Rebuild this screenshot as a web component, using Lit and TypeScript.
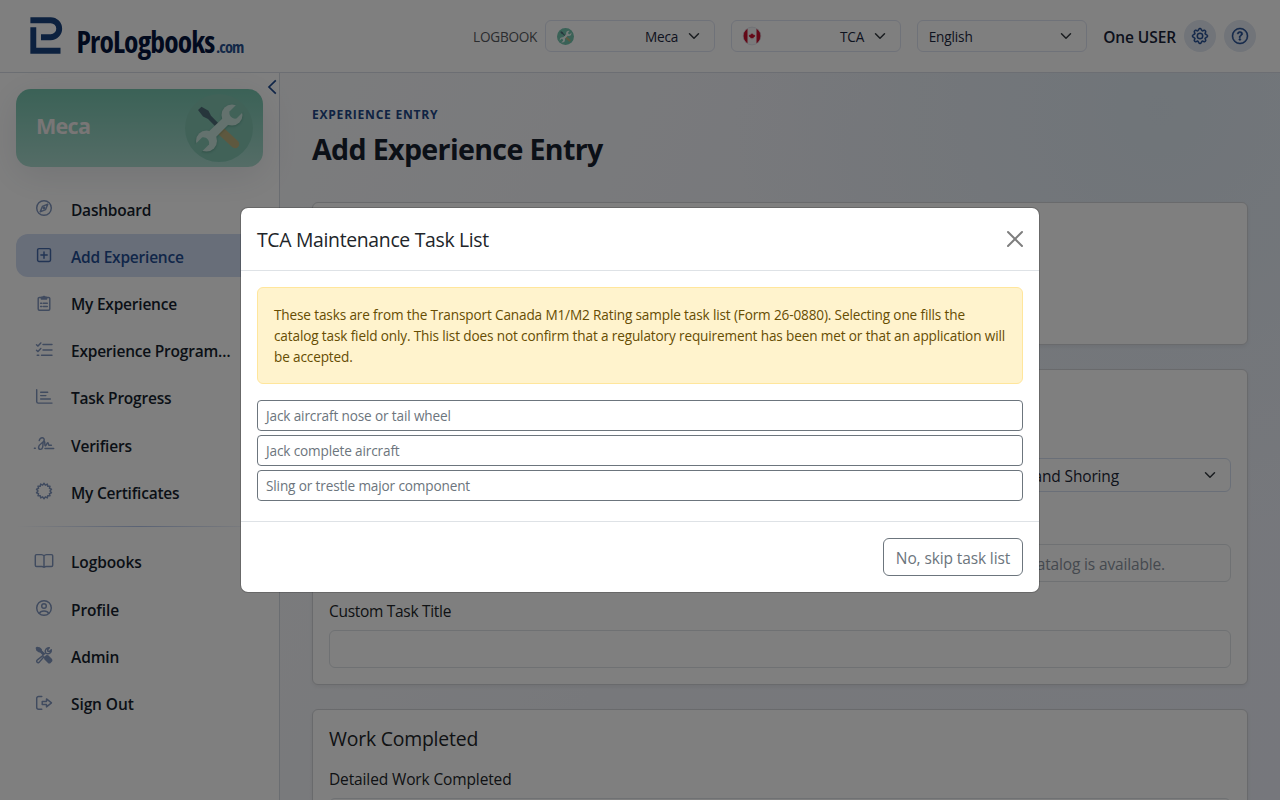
import { LitElement, html, css, svg } from "lit";
import { customElement, state } from "lit/decorators.js";
import { classMap } from "lit/directives/class-map.js";

const starPoints = Array.from({ length: 28 }, (_, i) => {
  const r = i % 2 ? 6 : 7.7;
  const a = (i * Math.PI) / 14;
  return `${(8 + r * Math.sin(a)).toFixed(2)},${(8 - r * Math.cos(a)).toFixed(2)}`;
}).join(" ");

const icons: Record<string, unknown> = {
  compass: svg`<circle cx="8" cy="8" r="7.3"/><path d="M11.8 4.2 9.6 9.6 4.2 11.8 6.4 6.4Z"/><circle cx="8" cy="8" r=".7"/>`,
  plus: svg`<rect x="1.6" y="1.6" width="12.9" height="12.9" rx="1.4"/><path d="M8 4.9v6.3M4.9 8h6.3"/>`,
  clipboard: svg`<path d="M5 2.4H3.4a1.2 1.2 0 0 0-1.2 1.2v10.5a1.2 1.2 0 0 0 1.2 1.2h9.2a1.2 1.2 0 0 0 1.2-1.2V3.6a1.2 1.2 0 0 0-1.2-1.2H11"/><path d="M5.4 4.1V2.3h1.3a1.4 1.4 0 0 1 2.6 0h1.3v1.8Z" fill="currentColor"/><path d="M7.3 8.2h4M7.3 11.4h4M4.6 8.2h1.1M4.6 11.4h1.1"/>`,
  checks: svg`<path d="M7 2.5h9M7 8h9M5.5 13.2H16M.5 2.7 2 4.1 4.8.9M.5 8.2 2 9.6 4.8 6.4M1.2 13.2h1.6"/>`,
  chart: svg`<path d="M.7.8v11.7a1.6 1.6 0 0 0 1.6 1.6H16M4.7 3.3h7M4.7 6.6h5.2M4.7 9.9h9.6"/>`,
  sign: svg`<path d="M-1.6 12.3h.9M3.2 4.6C4.200.9 8.600 1 8.200 4.200 7.800 7 3 7.700 2.600 11c-.3 2.900 3.300 3.300 4 .4.8-3.100-.1-6.100 1.400-6.200 1.500 0 .2 4.600 1.300 4.700 1.200.1 1.400-3.200 2.500-3.100 1 .1.300 2.500 1.400 2.500h2.200M9 12.500H17.700"/>`,
  badge: svg`<polygon points=${starPoints}/>`,
  book: svg`<path d="M8 3C7.400 1.900 6.400 1.600 5.400 1.600H.5a1.200 1.200 0 0 0-1.200 1.200v9.400a1.200 1.200 0 0 0 1.200 1.200H5.700c1 0 1.900.3 2.300.9.400-.6 1.300-.9 2.300-.9h5.200a1.200 1.200 0 0 0 1.200-1.200V2.800a1.200 1.200 0 0 0-1.200-1.200h-4.900C9.600 1.600 8.600 1.900 8 3ZM8 3v11"/>`,
  person: svg`<circle cx="8" cy="8" r="7.300"/><circle cx="8" cy="6" r="2.300"/><path d="M3.500 13.300c.7-1.900 2.300-2.300 4.500-2.300s3.800.4 4.500 2.300"/>`,
  tools: svg`<path d="M1 .4.400 1 .9 3.200 3 4.700h1.300l3 3.100 1-1-3.100-3V2.600L3.300.9ZM9.600 9.600 10.700 8.700l1.300.3 3.500 3.500a1.700 1.700 0 0 1 0 1.600l-1.400 1.400a1.700 1.700 0 0 1-1.600 0L9 12l-.3-1.300Z" fill="currentColor"/><path d="m6.900 8.600-5.500 4.300a1.500 1.500 0 1 0 2.100 2L8 9.700M8.900 6.600 9.600 5.700a3.500 3.500 0 0 1 3.700-4.900L11.600 2.700l.3 1.500 1.500.3 1.900-1.800a3.500 3.500 0 0 1-4.600 3.900"/>`,
  exit: svg`<path d="M5.800 1.500H2.600A1.900 1.900 0 0 0 .7 3.400v8.900a1.900 1.900 0 0 0 1.900 1.900h3.200M10.500 3.900l5 4-5 4V9.400H6.200V6.400h4.300Z"/>`,
};

const icon = (name: string) => html`<svg class="icon" viewBox="0 0 16 16">${icons[name]}</svg>`;
const chevron = html`<svg class="chev" viewBox="0 0 16 16"><path d="m2 5 6 6 6-6"/></svg>`;

const toolsArt = (id: string) => html`<svg class="art" viewBox="0 0 68 68">
  <defs>
    <mask id=${id}>
      <rect width="68" height="68" fill="#fff"/>
      <path d="M44.500 17.500 54 8l7 7-9.500 9.500c-4 1-8-3-7-7Z" fill="#000"/>
      <path d="M24 50.500 14.500 60l-7-7L17 43.500c4-1 8 3 7 7Z" fill="#000"/>
    </mask>
  </defs>
  <circle class="art-bg" cx="34" cy="34" r="34"/>
  <path d="m13 16 3.500-3.200 7 4 2.500 5L38 34l-3 3-12-12-5-2.500Z" fill="#4f6d78"/>
  <path d="m37 38 13 12" stroke="#bdb17f" stroke-width="8.500" stroke-linecap="round"/>
  <g mask="url(#${id})" class="wrench">
    <circle cx="47" cy="21" r="10.500"/><circle cx="21.500" cy="47" r="10.500"/>
    <path d="M29 32.500 38 24l6 6-19 19-7-6Z"/>
  </g>
</svg>`;

const leaf = "m0-4.100.9 1.600 1-.4-.3 2 1.200-1 .4.800 1.200-.2-.6 1.300.5.4L2 2.100l.2.900L.3 2.700V4.200h-.6V2.700L-2.200 3-2 2.100-4.300.4l.5-.4-.6-1.300 1.200.2.400-.8 1.200 1-.3-2 1 .4Z";

@customElement("app-root")
export class AppRoot extends LitElement {
  @state() private active = "Add Experience";

  private primary = [
    ["compass", "Dashboard"], ["plus", "Add Experience"], ["clipboard", "My Experience"],
    ["checks", "Experience Program…"], ["chart", "Task Progress"], ["sign", "Verifiers"], ["badge", "My Certificates"],
  ];
  private secondary = [["book", "Logbooks"], ["person", "Profile"], ["tools", "Admin"], ["exit", "Sign Out"]];
  private tasks = ["Jack aircraft nose or tail wheel", "Jack complete aircraft", "Sling or trestle major component"];

  static styles = css`
    :host { display: block; width: 1280px; height: 800px; overflow: hidden; position: relative; background: #fff;
      font-family: "Open Sans", "Noto Sans", sans-serif; font-size: 15.5px; font-stretch: 97.5%; line-height: 24px; color: #212529; }
    * { box-sizing: border-box; }
    h1, h2, h3, p { margin: 0; font-weight: 400; }
    svg { display: block; overflow: visible; flex: none; }
    button { font: inherit; font-stretch: inherit; background: none; cursor: pointer; }
    .page { height: 800px; display: grid; grid-template: 73px 1fr / 280px 1fr; }
    header { grid-column: 1 / 3; display: flex; align-items: center; border-bottom: 1px solid #d8dde6; padding: 0 24px 0 30px; background: #fff; }
    .logo { display: flex; align-items: flex-start; height: 72px; padding-top: 17px; color: #04143c; }
    .mark { width: 32px; height: 37px; fill: none; stroke: #19427f; stroke-width: 5.900; margin-right: 14.500px; }
    .name { font-weight: 700; font-size: 29.500px; font-stretch: 75%; letter-spacing: -.86px; line-height: 40px; padding-top: 5px; white-space: nowrap; }
    .com { font-weight: 700; font-size: 16.500px; letter-spacing: -.95px; color: #27508f; margin-left: 1.500px; }
    .tools { margin-left: auto; display: flex; align-items: center; }
    .label { font-size: 13.600px; font-weight: 500; color: #56595d; margin-right: 8px; letter-spacing: -.24px; padding-top: 2px; }
    .select { width: 170px; height: 32px; border: 1.500px solid #dfe4f2; border-radius: 6px; display: flex; align-items: center; margin-right: 16px; padding: 0 12px 0 10.500px; font-size: 13.600px; color: #1c2740; }
    .select span { padding-top: 2px; letter-spacing: -.15px; }
    .select .chev { margin-left: 8px; }
    .grow { flex: 1; }
    .chev { width: 16px; height: 12px; fill: none; stroke: #343a40; stroke-width: 2; stroke-linecap: round; stroke-linejoin: round; }
    .flag { width: 18px; height: 18px; }
    .mini { width: 17px; height: 17px; margin-right: 1px; }
    .art { width: 100%; height: 100%; }
    .mini .art-bg { fill: #74c4ae; }
    .mini .wrench { fill: #eef8f5; }
    .user { font-weight: 600; letter-spacing: -.1px; color: #182338; margin-right: 8px; padding-top: 2px; }
    .round { width: 32px; height: 32px; border-radius: 50%; background: #e2e8f2; display: grid; place-items: center; margin-left: 8px; color: #214b90; }
    .user + .round { margin-left: 0; }
    .round svg { width: 16px; height: 16px; fill: currentColor; stroke: currentColor; stroke-width: .5; }
    aside { border-right: 1px solid #d5dae3; padding: 16px; position: relative; background: #fff; }
    .collapse { position: absolute; left: 267px; top: 6px; width: 10px; height: 16px; fill: none; stroke: #214b90; stroke-width: 1.700; }
    .tile { height: 78px; border-radius: 15px; background: linear-gradient(#76c4ae, #a9d9cd); display: flex; align-items: center; justify-content: space-between; padding: 0 10px 0 20px; box-shadow: 0 8px 36px rgba(40,60,80,.12); color: #f3ecec; }
    .tile-name { font-size: 21.500px; font-weight: 700; letter-spacing: -.7px; padding-bottom: 5px; }
    .tile-art { width: 68px; height: 68px; }
    .tile .art-bg { fill: #82c4b1; }
    .tile .wrench { fill: #c8e4dc; filter: drop-shadow(0 1px 1px rgba(0,60,40,.25)); }
    nav { display: flex; flex-direction: column; gap: 4.200px; margin-top: 19.800px; }
    .item { height: 43px; border-radius: 12px; display: flex; align-items: center; padding-left: 19.600px; gap: 19.400px; color: #161f2e; font-weight: 600; letter-spacing: -.22px; white-space: nowrap; }
    .item span { padding-top: 2.600px; }
    .item.on { background: #d1dcf2; color: #224c92; }
    .icon { width: 16px; height: 16px; fill: none; stroke: currentColor; stroke-width: 1.450; color: #8196be; stroke-linecap: round; stroke-linejoin: round; }
    .on .icon { color: #4468a8; }
    .rule { height: 1px; margin: 12.800px 0 0; background: linear-gradient(90deg, transparent, #b5c6ea, transparent); }
    .second { margin-top: 12.800px; }
    .second .item { letter-spacing: -.1px; }
    main { overflow: hidden; padding: 32px; background: radial-gradient(circle at 88% 5%, rgba(222,233,242,.9), transparent 38%), linear-gradient(115deg, #f8f9fb 0%, #eff1f7 45%, #eceff8 100%); }
    .eyebrow { font-size: 12.100px; font-weight: 700; letter-spacing: .73px; color: #204686; line-height: 20px; }
    h1 { font-size: 28.600px; font-weight: 700; letter-spacing: -.66px; line-height: 40px; color: #16202f; margin-top: 4px; }
    .card { border: 1px solid #d2d4d8; border-radius: 6px; background: #fff; padding: 16px; margin-bottom: 24px; box-shadow: 0 2px 4px rgba(0,0,0,.06); }
    .card.top { height: 143.500px; margin-top: 32.500px; }
    .card.task { height: 316px; padding-top: 88px; }
    .card.work { height: 300px; margin-bottom: 0; }
    .field { border: 1px solid #dee2e6; border-radius: 6px; height: 38px; display: flex; align-items: center; justify-content: flex-end; }
    .field.pick { height: 34px; border-color: #d5dff0; padding-right: 12px; gap: 83px; color: #1c2636; width: 50%; margin-left: auto; }
    .field.pick span, .field.hint span { padding-top: 2px; letter-spacing: -.15px; }
    .field.hint { margin-top: 52px; padding-right: 65px; color: #8a929e; }
    .caption { padding-top: 1px; height: 24px; margin: 16px 0 8px; letter-spacing: -.3px; }
    .card h2 { font-size: 19.400px; letter-spacing: -.2px; padding-top: 1px; height: 24px; }
    h2 + .caption { letter-spacing: -.13px; }
    .backdrop { position: absolute; inset: 0; background: rgba(0,0,0,.5); display: grid; place-items: center; }
    .modal { width: 800px; border: 1px solid rgba(0,0,0,.175); border-radius: 8px; background: #fff; background-clip: padding-box; }
    .head { height: 63px; padding: 0 16px; border-bottom: 1px solid #dee2e6; display: flex; align-items: center; justify-content: space-between; }
    .head h3 { font-size: 19.400px; letter-spacing: -.32px; padding-top: 1px; }
    .close { border: 0; padding: 0; opacity: .5; width: 16px; height: 16px; }
    .body { padding: 16px 16px 20px; display: flex; flex-direction: column; gap: 4px; }
    .alert { height: 97px; border: 1px solid #ffe69c; border-radius: 6px; background: #fff3cd; color: #664d03; padding: 16px; font-size: 13.600px; letter-spacing: -.143px; line-height: 21px; margin-bottom: 12px; white-space: nowrap; }
    .task-btn { border: 1px solid #6c757d; border-radius: 4px; height: 31px; padding: 1px 8px 0; text-align: left; font-size: 13.600px; letter-spacing: -.14px; color: #6c757d; }
    .foot { border-top: 1px solid #dee2e6; padding: 16px; display: flex; justify-content: flex-end; }
    .skip { width: 140px; height: 38px; border: 1px solid #6c757d; border-radius: 6px; color: #6c757d; letter-spacing: -.12px; padding: 2px 0 0; white-space: nowrap; }
  `;

  private item([ic, text]: string[]) {
    return html`<div class=${classMap({ item: true, on: text === this.active })} @click=${() => (this.active = text)}>
      ${icon(ic)}<span>${text}</span></div>`;
  }

  render() {
    return html`
      <div class="page">
        <header>
          <div class="logo">
            <svg class="mark" viewBox="0 0 32 37"><path d="M.4 3.200H20.700a8.500 8.500 0 0 1 0 17H11M3.300 10.200V33.700H30.500"/></svg>
            <div class="name">ProLogbooks<span class="com">.com</span></div>
          </div>
          <div class="tools">
            <span class="label">LOGBOOK</span>
            <div class="select"><div class="mini">${toolsArt("m1")}</div><i class="grow"></i><span>Meca</span>${chevron}</div>
            <div class="select">
              <svg class="flag" viewBox="-9 -9 18 18"><defs><clipPath id="fc"><circle r="8.800"/></clipPath></defs>
                <g clip-path="url(#fc)"><path fill="#f4f4f6" d="M-9-9H9V9H-9Z"/><path fill="#c8102e" d="M-9-9h4.500V9H-9ZM4.500-9H9V9H4.500Z"/></g>
                <path fill="#c8102e" transform="scale(.75)" d=${leaf}/><circle r="8.900" fill="none" stroke="#d5dae4" stroke-width=".7"/></svg>
              <i class="grow"></i><span>TCA</span>${chevron}
            </div>
            <div class="select"><span>English</span><i class="grow"></i>${chevron}</div>
            <span class="user">One USER</span>
            <div class="round"><svg viewBox="0 0 16 16"><path d="M8 4.754a3.246 3.246 0 1 0 0 6.492 3.246 3.246 0 0 0 0-6.492M5.754 8a2.246 2.246 0 1 1 4.492 0 2.246 2.246 0 0 1-4.492 0"/><path d="M9.796 1.343c-.527-1.790-3.065-1.790-3.592 0l-.094.319a.873.873 0 0 1-1.255.520l-.292-.160c-1.640-.892-3.433.902-2.540 2.541l.159.292a.873.873 0 0 1-.520 1.255l-.319.094c-1.790.527-1.790 3.065 0 3.592l.319.094a.873.873 0 0 1 .520 1.255l-.160.292c-.892 1.640.901 3.434 2.541 2.540l.292-.159a.873.873 0 0 1 1.255.520l.094.319c.527 1.790 3.065 1.790 3.592 0l.094-.319a.873.873 0 0 1 1.255-.520l.292.160c1.640.893 3.434-.902 2.540-2.541l-.159-.292a.873.873 0 0 1 .520-1.255l.319-.094c1.790-.527 1.790-3.065 0-3.592l-.319-.094a.873.873 0 0 1-.520-1.255l.160-.292c.893-1.640-.902-3.433-2.541-2.540l-.292.159a.873.873 0 0 1-1.255-.520zm-2.633.283c.246-.835 1.428-.835 1.674 0l.094.319a1.873 1.873 0 0 0 2.693 1.115l.291-.160c.764-.415 1.600.420 1.184 1.185l-.159.292a1.873 1.873 0 0 0 1.116 2.692l.318.094c.835.246.835 1.428 0 1.674l-.319.094a1.873 1.873 0 0 0-1.115 2.693l.160.291c.415.764-.420 1.600-1.185 1.184l-.291-.159a1.873 1.873 0 0 0-2.693 1.116l-.094.318c-.246.835-1.428.835-1.674 0l-.094-.319a1.873 1.873 0 0 0-2.692-1.115l-.292.160c-.764.415-1.600-.420-1.184-1.185l.159-.291A1.873 1.873 0 0 0 1.945 8.930l-.319-.094c-.835-.246-.835-1.428 0-1.674l.319-.094A1.873 1.873 0 0 0 3.060 4.377l-.160-.292c-.415-.764.420-1.600 1.185-1.184l.292.159a1.873 1.873 0 0 0 2.692-1.115z"/></svg></div>
            <div class="round"><svg viewBox="0 0 16 16"><path d="M8 15A7 7 0 1 1 8 1a7 7 0 0 1 0 14m0 1A8 8 0 1 0 8 0a8 8 0 0 0 0 16"/><path d="M5.255 5.786a.237.237 0 0 0 .241.247h.825c.138 0 .248-.113.266-.250.090-.656.540-1.134 1.342-1.134.686 0 1.314.343 1.314 1.168 0 .635-.374.927-.965 1.371-.673.489-1.206 1.060-1.168 1.987l.003.217a.250.250 0 0 0 .250.246h.811a.250.250 0 0 0 .250-.250v-.105c0-.718.273-.927 1.010-1.486.609-.463 1.244-.977 1.244-2.056 0-1.511-1.276-2.241-2.673-2.241-1.267 0-2.655.590-2.750 2.286m1.557 5.763c0 .533.425.927 1.010.927.609 0 1.028-.394 1.028-.927 0-.552-.420-.940-1.029-.940-.584 0-1.009.388-1.009.940"/></svg></div>
          </div>
        </header>
        <aside>
          <svg class="collapse" viewBox="0 0 10 16"><path d="M8.800 1.400 2 8l6.800 6.600"/></svg>
          <div class="tile"><span class="tile-name">Meca</span><div class="tile-art">${toolsArt("m2")}</div></div>
          <nav>${this.primary.map((i) => this.item(i))}</nav>
          <div class="rule"></div>
          <nav class="second">${this.secondary.map((i) => this.item(i))}</nav>
        </aside>
        <main>
          <p class="eyebrow">EXPERIENCE ENTRY</p>
          <h1>Add Experience Entry</h1>
          <section class="card top"></section>
          <section class="card task">
            <div class="field pick"><span>and Shoring</span>${chevron}</div>
            <div class="field hint"><span>catalog is available.</span></div>
            <p class="caption">Custom Task Title</p>
            <div class="field"></div>
          </section>
          <section class="card work">
            <h2>Work Completed</h2>
            <p class="caption">Detailed Work Completed</p>
            <div class="field"></div>
          </section>
        </main>
      </div>
      <div class="backdrop">
        <div class="modal">
          <div class="head"><h3>TCA Maintenance Task List</h3>
            <button class="close" aria-label="Close"><svg viewBox="0 0 16 16" width="16" height="16"><path d="M.293.293a1 1 0 0 1 1.414 0L8 6.586 14.293.293a1 1 0 1 1 1.414 1.414L9.414 8l6.293 6.293a1 1 0 0 1-1.414 1.414L8 9.414l-6.293 6.293a1 1 0 0 1-1.414-1.414L6.586 8 .293 1.707a1 1 0 0 1 0-1.414"/></svg></button>
          </div>
          <div class="body">
            <div class="alert">These tasks are from the Transport Canada M1/M2 Rating sample task list (Form 26-0880). Selecting one fills the<br>catalog task field only. This list does not confirm that a regulatory requirement has been met or that an application will<br>be accepted.</div>
            ${this.tasks.map((t) => html`<button class="task-btn">${t}</button>`)}
          </div>
          <div class="foot"><button class="skip">No, skip task list</button></div>
        </div>
      </div>`;
  }
}
